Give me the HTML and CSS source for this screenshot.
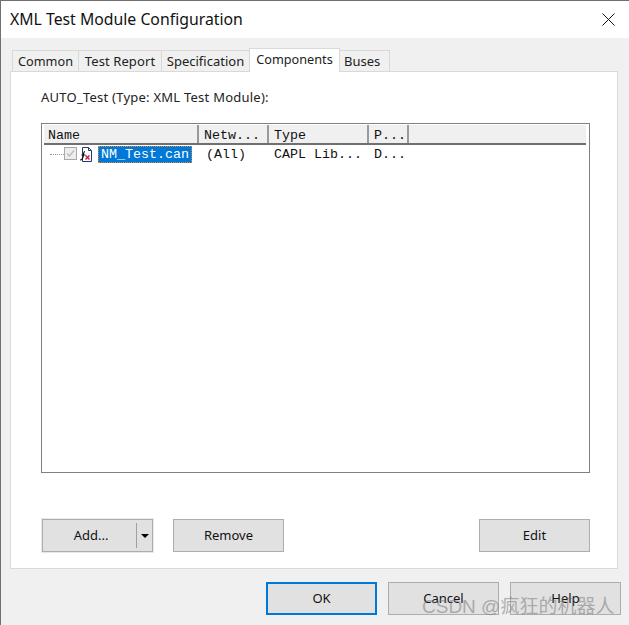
FILE: index.html
```html
<!DOCTYPE html>
<html lang="en">
<head>
<meta charset="utf-8">
<title>XML Test Module Configuration</title>
<link rel="stylesheet" href="styles.css">
</head>
<body>
<div class="window">
  <header class="titlebar">
    <h1 class="title">XML Test Module Configuration</h1>
    <svg class="close" width="13" height="13" viewBox="0 0 13 13"><path d="M.5.5l12 12M12.500.5l-12 12" stroke="#111" stroke-width="1" fill="none"/></svg>
  </header>
  <main class="content">
    <div class="tabs">
      <div class="tab t-common">Common</div>
      <div class="tab t-report">Test Report</div>
      <div class="tab t-spec">Specification</div>
      <div class="tab active t-comp">Components</div>
      <div class="tab t-buses">Buses</div>
    </div>
    <section class="panel">
      <p class="caption">AUTO_Test (Type: XML Test Module):</p>
      <div class="list">
        <div class="list-head">
          <div class="col c-name">Name</div>
          <div class="col c-net">Netw...</div>
          <div class="col c-type">Type</div>
          <div class="col c-p">P...</div>
          <div class="col c-rest"></div>
        </div>
        <div class="row">
          <div class="cell-name">
            <span class="dots"></span>
            <svg class="check" width="13" height="13" viewBox="0 0 13 13"><rect x=".5" y=".5" width="12" height="12" fill="#eee" stroke="#a8a8a8"/><path d="M3 6.500l2.500 2.500L10 3.500" stroke="#bbb" stroke-width="1.400" fill="none"/></svg>
            <svg class="file" width="13" height="15" viewBox="0 0 13 15"><path d="M3.500.5h6l3 3v11h-9z" fill="#fff" stroke="#223a70"/><path d="M9.500.5v3h3" fill="none" stroke="#223a70"/><path d="M6 4.500C4.600 4.500 4.600 6 4.400 8 4.200 10.500 4 13 1 13M2.500 8h4" fill="none" stroke="#111" stroke-width="1.200"/><path d="M6.500 8.500l4 4M10.500 8.500l-4 4" stroke="#d0203a" stroke-width="1.500"/></svg>
            <span class="selected">NM_Test.can</span>
          </div>
          <div class="cell c-net-cell">(All)</div>
          <div class="cell c-type-cell">CAPL Lib...</div>
          <div class="cell c-p-cell">D...</div>
        </div>
      </div>
      <div class="actions">
        <button class="btn split" type="button"><span class="split-label">Add...</span><span class="split-arrow"></span></button>
        <button class="btn" type="button">Remove</button>
        <button class="btn push" type="button">Edit</button>
      </div>
    </section>
    <footer class="footer">
      <button class="btn primary" type="button">OK</button>
      <button class="btn" type="button">Cancel</button>
      <button class="btn" type="button">Help</button>
    </footer>
  </main>
  <div class="watermark">CSDN @疯狂的机器人</div>
</div>
</body>
</html>
```
FILE: styles.css
```css
* { box-sizing: border-box; }
html, body { margin: 0; padding: 0; }
body { width: 629px; height: 625px; overflow: hidden; background: #f0f0f0; font-family: "Noto Sans", "Open Sans", sans-serif; font-size: 13px; color: #111; }
.window { position: relative; width: 629px; height: 625px; border-top: 1px solid #707070; border-left: 1px solid #707070; display: flex; flex-direction: column; }
.titlebar { height: 37px; flex: none; background: #fff; display: flex; align-items: center; justify-content: space-between; padding: 0 14px 0 9px; }
.title { margin: 0; font-size: 15.8px; font-weight: 400; color: #111; line-height: 37px; }
.close { display: block; }
.content { flex: 1; padding: 10px 10px 0 9px; }
.tabs { display: flex; height: 23px; padding: 2px 0 0 2px; position: relative; }
.tab { height: 21px; border: 1px solid #d9d9d9; border-bottom: 0; border-right: 0; background: #f0f0f0; text-align: center; line-height: 20px; color: #222; font-size: 12.7px; white-space: nowrap; }
.t-common { width: 66px; }
.t-report { width: 83px; font-size: 13px; letter-spacing: 0.1px; }
.t-spec { width: 88px; font-size: 13px; }
.t-comp { width: 91px; }
.t-buses { width: 50px; border-right: 1px solid #d9d9d9; border-left: 0; text-align: left; padding-left: 4px; font-size: 13px; }
.tab.active { height: 24px; margin-top: -2px; background: #fff; border-right: 1px solid #d9d9d9; position: relative; z-index: 1; line-height: 21px; }
.panel { width: 608px; height: 498px; background: #fff; border: 1px solid #d9d9d9; padding: 0 28px 0 30px; display: flex; flex-direction: column; }
.caption { margin: 0; height: 51px; padding-top: 15px; line-height: 20px; font-size: 13px; letter-spacing: 0.24px; color: #222; }
.list { height: 350px; width: 549px; border: 1px solid #808080; padding: 1px 3px 0 2px; font-family: "Liberation Mono", monospace; font-size: 13.33px; }
.list-head { display: flex; height: 20px; background: #f0f0f0; border-bottom: 2px solid #707070; }
.col { height: 18px; border-right: 2px solid #9a9a9a; line-height: 21px; padding-left: 4px; color: #111; white-space: nowrap; }
.c-name { width: 155px; }
.c-net { width: 70px; padding-left: 5px; }
.c-type { width: 100px; padding-left: 5px; }
.c-p { width: 40px; padding-left: 5px; }
.c-rest { flex: 1; border-right: 0; }
.row { display: flex; height: 19px; align-items: center; }
.cell-name { width: 155px; display: flex; align-items: center; padding-left: 6px; }
.dots { width: 14px; height: 0; border-top: 1px dotted #999; }
.check { display: block; margin-top: -2px; }
.file { margin-left: 2px; display: block; }
.selected { margin-left: 6px; height: 17px; width: 94px; background: #0078d7; color: #fff; line-height: 18px; padding-left: 3px; outline: 1px dotted #e08a30; outline-offset: -1px; white-space: nowrap; }
.cell { white-space: nowrap; color: #111; }
.c-net-cell { width: 70px; padding-left: 7px; }
.c-type-cell { width: 100px; padding-left: 5px; }
.c-p-cell { padding-left: 5px; }
.actions { display: flex; gap: 20px; margin: 46px -1px 0 1px; }
.btn { width: 111px; height: 33px; background: #e1e1e1; border: 1px solid #adadad; padding: 0 0 2px; font: inherit; font-family: "Noto Sans", "Open Sans", sans-serif; font-size: 13px; color: #111; text-align: center; }
.split { display: flex; align-items: center; outline: 1px solid #e8e8e8; padding: 0; }
.split-label { width: 94px; height: 25px; line-height: 24px; padding-left: 3px; border-right: 1px solid #a0a0a0; }
.split-arrow { margin-left: 4px; width: 0; height: 0; border-left: 4px solid transparent; border-right: 4px solid transparent; border-top: 4px solid #000; }
.push { margin-left: auto; }
.footer { display: flex; gap: 11px; justify-content: flex-end; margin-top: 13px; margin-right: -2px; }
.primary { border: 2px solid #0078d7; }
.watermark { position: absolute; left: 421px; top: 594px; font-size: 19px; line-height: 24px; color: rgba(120, 120, 120, 0.55); font-family: "Liberation Sans", "Noto Sans CJK SC", sans-serif; white-space: nowrap; }
```
